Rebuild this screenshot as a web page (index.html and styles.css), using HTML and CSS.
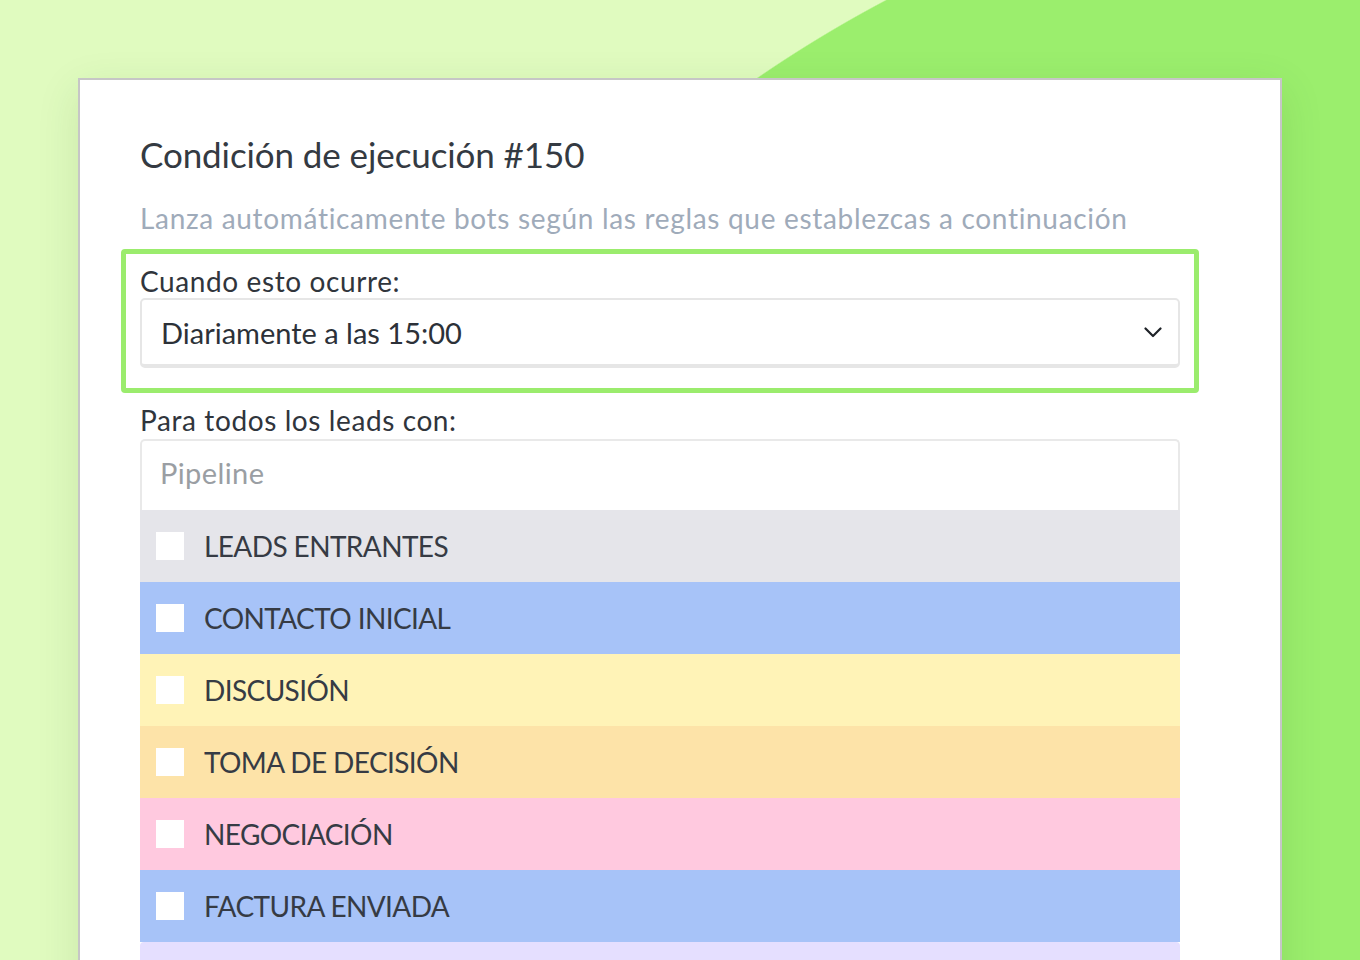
FILE: index.html
```html
<!DOCTYPE html>
<html lang="es">
<head>
    <meta charset="UTF-8">
    <title>Condición de ejecución #150</title>
    <link rel="stylesheet" href="styles.css">
</head>
<body>
    <div class="card">
        <h1 class="title">Condición de ejecución #150</h1>
        <p class="subtitle">Lanza automáticamente bots según las reglas que establezcas a continuación</p>

        <div class="trigger">
            <div class="label">Cuando esto ocurre:</div>
            <div class="select">
                <span>Diariamente a las 15:00</span>
                <svg class="chevron" width="18" height="11" viewBox="0 0 18 11">
                    <polyline points="1.5,1.5 9,9 16.5,1.5" fill="none" stroke="#1f2328" stroke-width="2.2" stroke-linecap="round" stroke-linejoin="round"/>
                </svg>
            </div>
        </div>

        <div class="label label-leads">Para todos los leads con:</div>
        <div class="pipeline">Pipeline</div>
        <ul class="stages">
            <li class="stage gray"><span class="box"></span>LEADS ENTRANTES</li>
            <li class="stage blue"><span class="box"></span>CONTACTO INICIAL</li>
            <li class="stage yellow"><span class="box"></span>DISCUSIÓN</li>
            <li class="stage orange"><span class="box"></span>TOMA DE DECISIÓN</li>
            <li class="stage pink"><span class="box"></span>NEGOCIACIÓN</li>
            <li class="stage blue"><span class="box"></span>FACTURA ENVIADA</li>
            <li class="stage lilac"><span class="box"></span>GANADO</li>
        </ul>
    </div>
</body>
</html>
```

FILE: styles.css
```css
html, body {
    height: 100%;
}
body {
    margin: 0;
    overflow: hidden;
    font-family: Lato, "Open Sans", sans-serif;
    color: #363b42;
    background: radial-gradient(circle 1300px at 1493px 1149px, #9bee6d 99.9%, #e0fbbf 100%);
}
.card {
    box-sizing: border-box;
    width: 1204px;
    height: 1000px;
    margin: 78px 0 0 78px;
    padding: 54px 100px 0 60px;
    background: #fff;
    border: 2px solid #c6c6c6;
    box-shadow: 0 12px 40px rgba(40, 90, 20, 0.12);
}
.title {
    margin: 0;
    font-size: 35px;
    line-height: 40px;
    font-weight: 400;
    letter-spacing: -0.1px;
    color: #343a42;
}
.subtitle {
    margin: 28px 0 0 0;
    font-size: 28px;
    line-height: 32px;
    letter-spacing: 0.68px;
    color: #9fabba;
}
.trigger {
    margin: 15px -19px 0 -19px;
    padding: 10px 14px 20px 14px;
    border: 5px solid #9bec6d;
    border-radius: 4px;
}
.label {
    font-size: 28px;
    line-height: 34px;
    letter-spacing: 0.6px;
    color: #30353c;
}
.label-leads {
    margin-top: 10px;
}
.select {
    box-sizing: border-box;
    height: 70px;
    display: flex;
    align-items: center;
    justify-content: space-between;
    padding: 0 16px 0 19px;
    border: 2px solid #e6e6e6;
    border-bottom-width: 4px;
    border-radius: 5px;
    font-size: 29px;
    color: #2c3138;
}
.pipeline {
    box-sizing: border-box;
    height: 71px;
    margin-top: 2px;
    display: flex;
    align-items: center;
    padding: 0 0 6px 18px;
    border: 2px solid #e9e9e9;
    border-bottom: none;
    border-radius: 5px 5px 0 0;
    font-size: 29px;
    letter-spacing: 0.4px;
    color: #9a9ea3;
}
.stages {
    list-style: none;
    margin: 0;
    padding: 0;
}
.stage {
    height: 72px;
    display: flex;
    align-items: center;
    gap: 20px;
    padding-left: 16px;
    font-size: 28px;
    letter-spacing: -0.6px;
    color: #363b44;
}
.box {
    width: 28px;
    height: 28px;
    background: #fff;
}
.gray { background: #e5e5ea; }
.blue { background: #a7c3f8; }
.yellow { background: #fff3b7; }
.orange { background: #fde3a8; }
.pink { background: #ffc9df; }
.lilac {
    background: #e5dfff;
    border-radius: 4px 4px 0 0;
}
```
